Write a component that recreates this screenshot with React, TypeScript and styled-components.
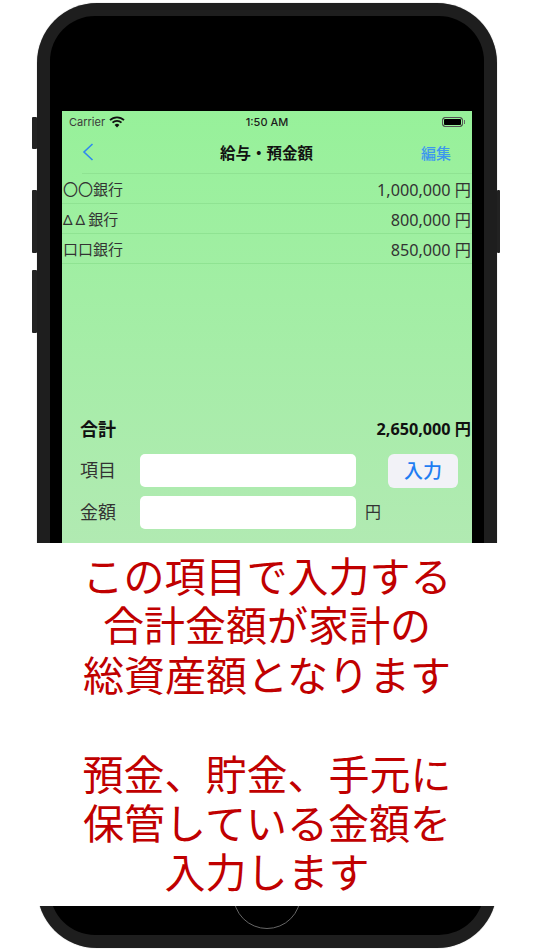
import styled, { createGlobalStyle } from "styled-components";

const rows = [
  { marks: "〇〇", spacing: 0, amount: "1,000,000 円" },
  { marks: "ΔΔ", spacing: 3, amount: "800,000 円" },
  { marks: "口口", spacing: 0, amount: "850,000 円" },
];

const App = () => {
  return (
    <Page>
      <GlobalStyle />
      <Phone>
        <SideButton $side="left" $top={114} $height={32} />
        <SideButton $side="left" $top={187} $height={63} />
        <SideButton $side="left" $top={267} $height={63} />
        <SideButton $side="right" $top={187} $height={63} />
        <Bezel>
          <Screen>
            <StatusBar>
              <StatusLeft>
                Carrier
                <svg width="16" height="12" viewBox="0 0 16 12">
                  <path d="M1 4.2a10 10 0 0 1 14 0" fill="none" stroke="#111" strokeWidth="1.8" />
                  <path d="M3.5 6.7a6.4 6.4 0 0 1 9 0" fill="none" stroke="#111" strokeWidth="1.8" />
                  <path d="M8 11.4 5.6 8.9a3.4 3.4 0 0 1 4.8 0z" fill="#111" />
                </svg>
              </StatusLeft>
              <StatusTime>1:50 AM</StatusTime>
              <Battery>
                <BatteryBody />
                <BatteryTip />
              </Battery>
            </StatusBar>
            <NavBar>
              <BackButton>
                <svg width="12" height="20" viewBox="0 0 12 20">
                  <path d="M10.5 2 2 10l8.5 8" fill="none" stroke="#2f88f0" strokeWidth="1.6" />
                </svg>
              </BackButton>
              <NavTitle>給与・預金額</NavTitle>
              <EditButton>編集</EditButton>
            </NavBar>
            <List>
              {rows.map((row) => (
                <Row key={row.marks}>
                  <span>
                    <Marks $spacing={row.spacing}>{row.marks}</Marks>銀行
                  </span>
                  <Amount>{row.amount}</Amount>
                </Row>
              ))}
            </List>
            <TotalRow>
              <TotalLabel>合計</TotalLabel>
              <TotalAmount>2,650,000 円</TotalAmount>
            </TotalRow>
            <FormRow>
              <FieldLabel>項目</FieldLabel>
              <Field />
              <SubmitButton>入力</SubmitButton>
            </FormRow>
            <FormRow>
              <FieldLabel>金額</FieldLabel>
              <Field />
              <Unit>円</Unit>
            </FormRow>
          </Screen>
          <HomeButton />
        </Bezel>
      </Phone>
      <Caption>
        <p>この項目で入力する</p>
        <p>合計金額が家計の</p>
        <p>総資産額となります</p>
        <br />
        <p>預金、貯金、手元に</p>
        <p>保管している金額を</p>
        <p>入力します</p>
      </Caption>
    </Page>
  );
};

export default App;

const GlobalStyle = createGlobalStyle`
  html, body {
    margin: 0;
    padding: 0;
    background: #fff;
  }
  * {
    box-sizing: border-box;
  }
  body {
    font-family: "Liberation Sans", "Noto Sans CJK JP", sans-serif;
  }
`;

const Page = styled.div`
  position: relative;
  width: 534px;
  height: 950px;
  padding: 3px 37px 2px;
  overflow: hidden;
  background: #fff;
`;

const Phone = styled.div`
  position: relative;
  height: 945px;
  padding: 13px;
  border-radius: 60px;
  background: #1e1e1e;
  box-shadow: 0 0 1px #888;
`;

const SideButton = styled.div<{ $side: "left" | "right"; $top: number; $height: number }>`
  position: absolute;
  top: ${(props) => props.$top}px;
  ${(props) => (props.$side === "left" ? "left: -5px;" : "right: -3px;")}
  width: ${(props) => (props.$side === "left" ? 5 : 3)}px;
  height: ${(props) => props.$height}px;
  border-radius: 1px;
  background: #222;
`;

const Bezel = styled.div`
  position: relative;
  height: 919px;
  padding: 95px 12px 0;
  border-radius: 45px;
  background: #000;
`;

const Screen = styled.div`
  display: flex;
  flex-direction: column;
  height: 432px;
  padding-bottom: 5px;
  background: linear-gradient(#97f19a, #b1eab2);
  color: #222;
`;

const StatusBar = styled.div`
  display: grid;
  grid-template-columns: 1fr auto 1fr;
  align-items: center;
  height: 22px;
  padding: 0 7px 0 7px;
  font-family: Inter, "Liberation Sans", sans-serif;
  font-size: 11px;
  color: #1c1c1c;
`;

const StatusLeft = styled.div`
  display: flex;
  align-items: center;
  gap: 4px;
  color: #3a3a3a;
`;

const StatusTime = styled.div`
  font-weight: 500;
`;

const Battery = styled.div`
  display: flex;
  align-items: center;
  justify-content: flex-end;
  gap: 1px;
`;

const BatteryBody = styled.div`
  width: 21px;
  height: 10px;
  border: 1px solid #555;
  border-radius: 3px;
  background: #000;
  box-shadow: inset 0 0 0 1px #98f09a;
`;

const BatteryTip = styled.div`
  width: 1px;
  height: 4px;
  background: #666;
`;

const NavBar = styled.div`
  position: relative;
  display: grid;
  grid-template-columns: 1fr auto 1fr;
  align-items: center;
  height: 41px;
  padding: 0 21px 3px 20px;
  &::after {
    content: "";
    position: absolute;
    left: 20px;
    right: 0;
    bottom: 0;
    height: 1px;
    background: #8fe392;
  }
`;

const BackButton = styled.div`
  display: flex;
  align-items: center;
`;

const NavTitle = styled.div`
  font-family: "Noto Sans CJK JP", sans-serif;
  font-size: 15.5px;
  font-weight: 700;
  color: #111;
`;

const EditButton = styled.div`
  font-family: "Noto Sans CJK JP", sans-serif;
  font-size: 15px;
  font-weight: 500;
  color: #3d97ee;
  text-align: right;
`;

const List = styled.div`
  display: flex;
  flex: 1;
  flex-direction: column;
`;

const Row = styled.div`
  display: flex;
  align-items: center;
  justify-content: space-between;
  height: 30px;
  padding: 0 1px;
  border-bottom: 1px solid #8fe392;
  font-family: "Noto Sans", "Noto Sans CJK JP", sans-serif;
  font-size: 15px;
  color: #333;
`;

const Marks = styled.span<{ $spacing: number }>`
  letter-spacing: ${(props) => props.$spacing}px;
`;

const Amount = styled.span`
  font-size: 16.2px;
`;

const TotalRow = styled.div`
  display: flex;
  align-items: center;
  justify-content: space-between;
  height: 30px;
  margin-bottom: 11px;
  padding: 0 1px 0 18px;
  font-family: "Noto Sans", "Noto Sans CJK JP", sans-serif;
  font-weight: 700;
  color: #111;
`;

const TotalLabel = styled.span`
  font-size: 18px;
`;

const TotalAmount = styled.span`
  font-size: 16.2px;
`;

const FormRow = styled.div`
  display: flex;
  align-items: center;
  height: 33px;
  margin-bottom: 9px;
  padding-left: 18px;
`;

const FieldLabel = styled.div`
  width: 60px;
  padding-bottom: 4px;
  font-family: "Noto Sans CJK JP", sans-serif;
  font-size: 18px;
  color: #333;
`;

const Field = styled.div`
  width: 216px;
  height: 33px;
  border-radius: 5px;
  background: #fff;
`;

const SubmitButton = styled.div`
  display: flex;
  align-items: center;
  justify-content: center;
  width: 70px;
  height: 34px;
  margin-left: 32px;
  padding-bottom: 3px;
  border-radius: 6px;
  background: #f2f2f7;
  font-family: "Noto Sans CJK JP", sans-serif;
  font-size: 19px;
  font-weight: 500;
  color: #1f7df2;
`;

const Unit = styled.div`
  margin-left: 9px;
  padding-bottom: 4px;
  font-family: "Noto Sans CJK JP", sans-serif;
  font-size: 16px;
  color: #333;
`;

const HomeButton = styled.div`
  position: absolute;
  left: 183px;
  bottom: 6px;
  width: 68px;
  height: 68px;
  border: 1.5px solid #666;
  border-radius: 50%;
`;

const Caption = styled.div`
  position: absolute;
  left: 0;
  right: 0;
  top: 543px;
  height: 363px;
  padding-top: 7px;
  background: #fff;
  font-family: "Noto Sans CJK JP", sans-serif;
  font-size: 41px;
  line-height: 49.4px;
  color: #c00000;
  text-align: center;
  p {
    margin: 0;
  }
`;
